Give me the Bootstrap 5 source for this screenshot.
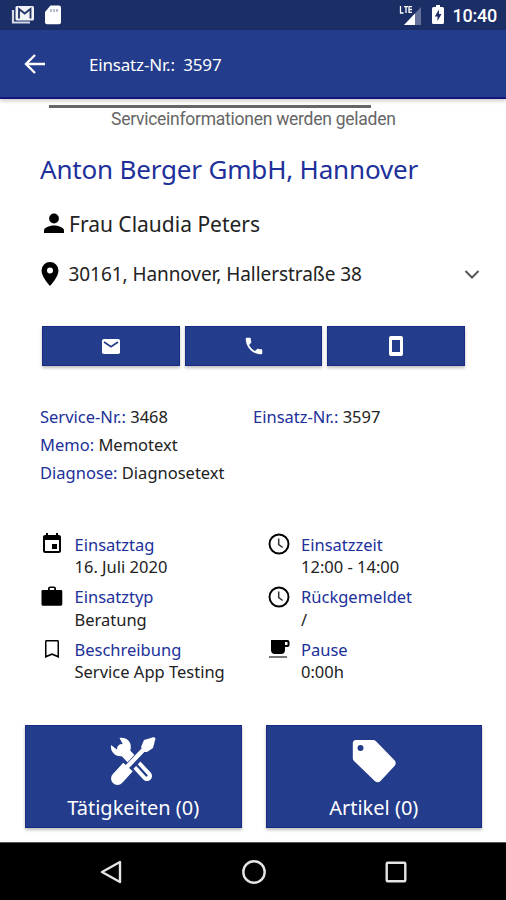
<!DOCTYPE html>
<html lang="de">
<head>
<meta charset="utf-8">
<meta name="viewport" content="width=device-width, initial-scale=1">
<title>Einsatz-Nr.: 3597</title>
<link href="https://cdn.jsdelivr.net/npm/bootstrap@5.3.0/dist/css/bootstrap.min.css" rel="stylesheet">
<style>
  :root { --brand: #233c8b; --ink: #20309a; }
  body { font-family: "Noto Sans", "Open Sans", sans-serif; color: #222; background: #fff; line-height: 1; }
  svg { display: block; flex: none; }
  .screen { width: 506px; height: 900px; }
  .statusbar { height: 30px; background: #1b2e66; padding: 0 9px 0 11px; }
  .clock { font: 500 18px/30px Roboto, sans-serif; letter-spacing: -.25px; margin-left: 9px; padding-top: 2px; }
  .battery { margin-left: 9px; }
  .appbar { height: 69px; background: var(--brand); border-bottom: 2px solid #14147c; padding: 1px 0 0 24px; box-shadow: 0 2px 4px rgba(0,0,0,.2); }
  .appbar-title { font-size: 17px; margin-left: 43px; padding-top: 1px; white-space: pre; letter-spacing: -.18px; }
  .loader { height: 34px; padding-top: 6px; }
  .loader-line { width: 322px; height: 3px; margin-left: 49px; background: #666; }
  .loader-text { font: 400 17.5px/20px Roboto, sans-serif; letter-spacing: -.26px; color: #666; padding-left: 111px; margin-top: 1px; white-space: nowrap; }
  .ink { color: var(--ink); }
  .customer { height: 74px; padding-left: 40px; font-size: 26px; font-weight: 400; letter-spacing: -.18px; white-space: nowrap; }
  .contact { height: 34px; padding-left: 42px; font-size: 21px; }
  .contact-name { margin-left: 3px; padding-top: 1px; }
  .address { height: 66px; padding: 0 24px 0 38px; font-size: 19px; }
  .addr-text { margin-left: 6.5px; letter-spacing: -.07px; padding-top: 1px; }
  .quick { padding: 19px 41px 0 42px; gap: 5px; }
  .fill { background: var(--brand); border: 1px solid #1a2b86; border-radius: 0; color: #fff; box-shadow: 0 2px 3px rgba(0,0,0,.25); }
  .quick .fill { height: 40px; flex: 1; }
  .facts { padding: 37px 40px 0; font-size: 16.5px; height: 157px; }
  .facts .line { height: 28px; }
  .facts .half { width: 214px; }
  .facts .half, .facts .line { white-space: nowrap; }
  .details { padding: 9px 24px 0 40px; height: 202px; font-size: 16.5px; }
  .entry { width: 226.5px; height: 52.7px; }
  .entry svg { width: 24px; }
  .entry-text { margin-left: 10.5px; padding-top: 1.5px; line-height: 22.4px; white-space: nowrap; }
  .actions { padding: 0 24px 0 25px; gap: 24px; }
  .actions .fill { flex: 1; height: 103px; font-size: 20px; line-height: 28px; padding: 8px 0 0; }
  .act-label { margin-top: 8px; }
  .navkeys { height: 58px; background: #000; border-top: 1px solid #555; padding: 0 97px 0 98px; }
</style>
</head>
<body>
<div class="screen d-flex flex-column overflow-hidden">
  <header>
    <div class="statusbar d-flex align-items-center text-white">
      <svg width="24" height="22" viewBox="0 0 24 22"><path d="M2 6v12.500h17" fill="none" stroke="#d5d9e5" stroke-width="2.200"/><rect x="4.500" y="2" width="18.500" height="14.500" rx="1.500" fill="#f2f3f7"/><path d="M8 14.500V5l5.700 4.600L19.500 5v9.500" fill="none" stroke="#26376c" stroke-width="1.900"/></svg>
      <svg class="ms-2" width="19" height="22" viewBox="0 0 19 22"><path d="M7.500 1.500H16a2 2 0 0 1 2 2v14.800a2 2 0 0 1-2 2H4a2 2 0 0 1-2-2V8z" fill="#fff"/><path d="M8 5v3M11 5v3M14 5v3" stroke="#8590b2" stroke-width="1.200"/></svg>
      <svg class="ms-auto" width="24" height="22" viewBox="0 0 24 22"><path d="M22 3v18H5z" fill="#64719a"/><path d="M16 9.500V21H5z" fill="#fff"/><path d="M1.500 2v7h3M5 2.700h4M7 2.700V9M13 2.700h-3V8.300h3M10 5.500h3" fill="none" stroke="#fff" stroke-width="1.300"/></svg>
      <svg class="battery" width="12" height="20" viewBox="0 0 12 20"><path d="M4 0h4v2h2.500A1.500 1.500 0 0 1 12 3.500v14A1.500 1.500 0 0 1 10.500 19h-9A1.500 1.500 0 0 1 0 17.500v-14A1.500 1.500 0 0 1 1.500 2H4z" fill="#fff"/><path d="M7 4.500 2.800 11.500h2.700v4.500L9.500 9H7z" fill="#1b2e66"/></svg>
      <span class="clock">10:40</span>
    </div>
    <div class="appbar d-flex align-items-center text-white">
      <svg width="22" height="22" viewBox="0 0 22 22"><path d="M21 11H2.500M11 2 2 11l9 9" fill="none" stroke="#fff" stroke-width="2.400"/></svg>
      <span class="appbar-title">Einsatz-Nr.:  3597</span>
    </div>
  </header>

  <div class="loader">
    <div class="loader-line"></div>
    <div class="loader-text">Serviceinformationen werden geladen</div>
  </div>

  <h1 class="customer ink d-flex align-items-center mb-0"><span>Anton Berger GmbH, Hannover</span></h1>
  <div class="contact d-flex align-items-center">
    <svg width="24" height="22" viewBox="0 0 24 22"><circle cx="12" cy="5.500" r="4.900" fill="#000"/><path d="M2 20v-2.500c0-3.300 6.500-5 10-5s10 1.700 10 5V20z" fill="#000"/></svg>
    <span class="contact-name">Frau Claudia Peters</span>
  </div>
  <div class="address d-flex align-items-center">
    <svg width="24" height="26" viewBox="0 0 24 26"><path d="M12 1a8.500 8.500 0 0 0-8.500 8.500C3.500 16 12 25 12 25s8.500-9 8.500-15.500A8.500 8.500 0 0 0 12 1zm0 5.500a3 3 0 1 1 0 6 3 3 0 0 1 0-6z" fill="#000"/></svg>
    <span class="addr-text text-nowrap">30161, Hannover, Hallerstraße 38</span>
    <svg class="ms-auto" width="20" height="20" viewBox="0 0 20 20"><path d="m3.500 7 6.500 6.500L16.500 7" fill="none" stroke="#555" stroke-width="2"/></svg>
  </div>

  <div class="quick d-flex">
    <button class="btn fill p-0 d-flex align-items-center justify-content-center" aria-label="E-Mail"><svg width="18" height="15" viewBox="0 0 18 15"><rect width="18" height="15" rx="1.800" fill="#fff"/><path d="m2 3 7 4.700L16 3" fill="none" stroke="#233c8b" stroke-width="1.600"/></svg></button>
    <button class="btn fill p-0 d-flex align-items-center justify-content-center" aria-label="Anruf"><svg width="22" height="22" viewBox="0 0 24 24"><path d="M6.620 10.790c1.440 2.830 3.760 5.140 6.590 6.590l2.200-2.200c.27-.27.670-.36 1.020-.24 1.120.37 2.330.57 3.570.57.550 0 1 .45 1 1V20c0 .55-.45 1-1 1C10.610 21 3 13.390 3 4c0-.55.450-1 1-1h3.500c.55 0 1 .45 1 1 0 1.250.2 2.450.57 3.570.11.350.030.740-.25 1.020z" fill="#fff"/></svg></button>
    <button class="btn fill p-0 d-flex align-items-center justify-content-center" aria-label="Mobil"><svg width="14" height="20" viewBox="0 0 14 20"><path fill-rule="evenodd" d="M2 0h10a2 2 0 0 1 2 2v16a2 2 0 0 1-2 2H2a2 2 0 0 1-2-2V2a2 2 0 0 1 2-2zm1 4v12h8V4z" fill="#fff"/></svg></button>
  </div>

  <div class="facts">
    <div class="line d-flex align-items-center">
      <div class="half"><span class="ink">Service-Nr.:</span> 3468</div>
      <div class="half"><span class="ink">Einsatz-Nr.:</span> 3597</div>
    </div>
    <div class="line d-flex align-items-center"><div><span class="ink">Memo:</span> Memotext</div></div>
    <div class="line d-flex align-items-center"><div><span class="ink">Diagnose:</span> Diagnosetext</div></div>
  </div>

  <div class="details d-flex">
    <div>
      <div class="entry d-flex">
        <svg height="24" viewBox="0 0 24 24"><path d="M17 12h-5v5h5v-5zM16 1v2H8V1H6v2H5c-1.110 0-2 .9-2 2v14c0 1.100.9 2 2 2h14c1.100 0 2-.9 2-2V5c0-1.100-.9-2-2-2h-1V1h-2zm3 18H5V8h14v11z"/></svg>
        <div class="entry-text"><div class="ink">Einsatztag</div><div>16. Juli 2020</div></div>
      </div>
      <div class="entry d-flex">
        <svg height="24" viewBox="0 0 24 24"><path fill-rule="evenodd" d="M8 5V3.500C8 2.200 9 1.500 10 1.500h4c1 0 2 .7 2 2V5h5a1.300 1.300 0 0 1 1.300 1.300v13A1.500 1.500 0 0 1 21 20.800H3a1.500 1.500 0 0 1-1.500-1.500v-13A1.300 1.300 0 0 1 3 5zm1.800 0h4.400V3H9.800z"/></svg>
        <div class="entry-text"><div class="ink">Einsatztyp</div><div>Beratung</div></div>
      </div>
      <div class="entry d-flex">
        <svg height="24" viewBox="0 0 24 24"><path d="M17.500 3h-11c-.9 0-1.500.7-1.500 1.500V21l7-3 7 3V4.500c0-.8-.6-1.500-1.500-1.500zm0 15.500L12 16.200l-5.500 2.300v-14h11z"/></svg>
        <div class="entry-text"><div class="ink">Beschreibung</div><div>Service App Testing</div></div>
      </div>
    </div>
    <div>
      <div class="entry d-flex">
        <svg height="24" viewBox="0 0 24 24"><circle cx="12" cy="12" r="9.500" fill="none" stroke="#000" stroke-width="1.900"/><path d="M11.700 6.500v6l4 3" fill="none" stroke="#333" stroke-width="1.500"/></svg>
        <div class="entry-text"><div class="ink">Einsatzzeit</div><div>12:00 - 14:00</div></div>
      </div>
      <div class="entry d-flex">
        <svg height="24" viewBox="0 0 24 24"><circle cx="12" cy="12" r="9.500" fill="none" stroke="#000" stroke-width="1.900"/><path d="M11.700 6.500v6l4 3" fill="none" stroke="#333" stroke-width="1.500"/></svg>
        <div class="entry-text"><div class="ink">Rückgemeldet</div><div>/</div></div>
      </div>
      <div class="entry d-flex">
        <svg height="24" viewBox="0 0 24 24"><path fill-rule="evenodd" d="M4 3h16.500A2 2 0 0 1 22.500 5v3a2 2 0 0 1-2 2H18v3a4 4 0 0 1-4 4H8a4 4 0 0 1-4-4zm14 2v3h2.500V5z"/><path d="M2 19h18v2H2z" fill="#777"/></svg>
        <div class="entry-text"><div class="ink">Pause</div><div>0:00h</div></div>
      </div>
    </div>
  </div>

  <div class="actions d-flex">
    <button class="btn fill d-flex flex-column align-items-center">
      <svg width="50" height="52" viewBox="0 0 50 52"><path d="m14 15 25 27" stroke="#fff" stroke-width="10" stroke-linecap="round"/><path d="m27 29 11.500 12.500" stroke="#233c8b" stroke-width="2.200" stroke-linecap="round"/><path d="M11.500 4c7-1.500 13 4 11 12l-7 6C8 23.500 2 18.500 3 11l6.500 5 5.500-5.500z" fill="#fff"/><path d="M21 33 40 13" stroke="#233c8b" stroke-width="9"/><path d="M17 35 39 12" stroke="#fff" stroke-width="4.500"/><path d="m33 13 3-7L46 3l1.500 1.500L45 14l-6 4h-3z" fill="#fff"/><path d="m20 33-10 11" stroke="#fff" stroke-width="13"/><circle cx="9.500" cy="44.500" r="6.500" fill="#fff"/></svg>
      <span class="act-label">Tätigkeiten (0)</span>
    </button>
    <button class="btn fill d-flex flex-column align-items-center">
      <svg width="50" height="52" viewBox="0 0 50 52"><path fill-rule="evenodd" d="M7 6h17a4 4 0 0 1 3 1.300l18.500 19a4 4 0 0 1 0 5.700L31.500 47a4 4 0 0 1-5.700 0L5 27a4 4 0 0 1-1.200-3V9.500A3.500 3.500 0 0 1 7 6zm4.500 5a3 3 0 1 0 0 6 3 3 0 0 0 0-6z" fill="#fff"/></svg>
      <span class="act-label">Artikel (0)</span>
    </button>
  </div>

  <nav class="navkeys d-flex align-items-center justify-content-between mt-auto">
    <svg width="26" height="26" viewBox="0 0 26 26"><path d="M22 3v20L4 13z" fill="none" stroke="#e4e4e4" stroke-width="2.400" stroke-linejoin="round"/></svg>
    <svg width="26" height="26" viewBox="0 0 26 26"><circle cx="13" cy="13" r="10.700" fill="none" stroke="#e4e4e4" stroke-width="2.400"/></svg>
    <svg width="26" height="26" viewBox="0 0 26 26"><rect x="3.700" y="3.700" width="18.600" height="18.600" rx="1" fill="none" stroke="#e4e4e4" stroke-width="2.400"/></svg>
  </nav>
</div>
<script src="https://cdn.jsdelivr.net/npm/bootstrap@5.3.0/dist/js/bootstrap.bundle.min.js"></script>
</body>
</html>
